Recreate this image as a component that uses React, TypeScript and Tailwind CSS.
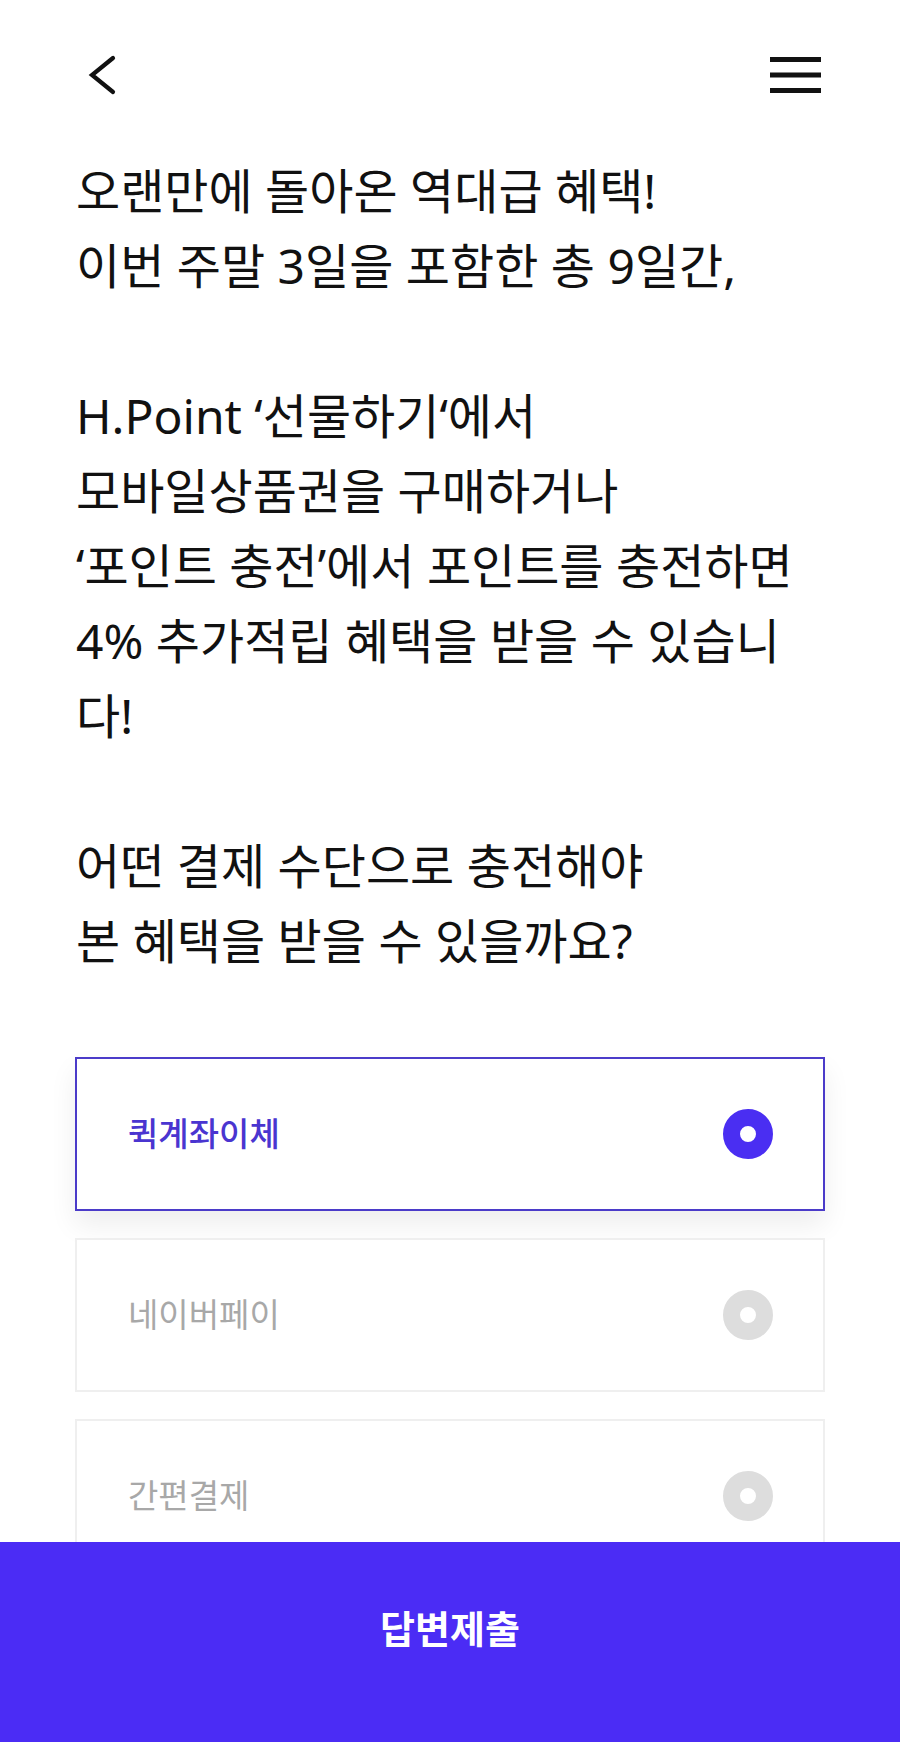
import React, { useState } from 'react';

const options = [
  { id: 'quick', label: '퀵계좌이체' },
  { id: 'naver', label: '네이버페이' },
  { id: 'simple', label: '간편결제' },
];

const lines = [
  '오랜만에 돌아온 역대급 혜택!',
  '이번 주말 3일을 포함한 총 9일간,',
  '',
  'H.Point ‘선물하기‘에서',
  '모바일상품권을 구매하거나',
  '‘포인트 충전’에서 포인트를 충전하면',
  '4% 추가적립 혜택을 받을 수 있습니',
  '다!',
  '',
  '어떤 결제 수단으로 충전해야',
  '본 혜택을 받을 수 있을까요?',
];

function Radio({ selected }: { selected: boolean }) {
  return (
    <div
      className={`w-[50px] h-[50px] rounded-full border-[17px] bg-white ${selected ? 'border-[#4a2ef2]' : 'border-[#dddddd]'}`}
    />
  );
}

export default function App() {
  const [selected, setSelected] = useState('quick');

  return (
    <div className="min-h-screen bg-white font-['Noto_Sans','Noto_Sans_CJK_KR',sans-serif]">
      {/* Top bar */}
      <header className="h-[150px] flex items-center justify-between pl-[87px] pr-[79px]">
        <button aria-label="back">
          <svg width="30" height="40" viewBox="0 0 30 40" fill="none">
            <polyline points="26,3 5,20 26,37" stroke="#111" strokeWidth="4.2" strokeLinecap="round" strokeLinejoin="miter" />
          </svg>
        </button>
        <button aria-label="menu">
          <svg width="51" height="36" viewBox="0 0 51 36">
            <rect x="0" y="0" width="51" height="5" fill="#111" />
            <rect x="0" y="15.5" width="51" height="5" fill="#111" />
            <rect x="0" y="31" width="51" height="5" fill="#111" />
          </svg>
        </button>
      </header>

      {/* Question text */}
      <div className="pt-[3px] px-[76px] text-[48px] leading-[75px] text-[#111] whitespace-nowrap">
        {lines.map((l, i) => (
          <div key={i} className="h-[75px]">{l}</div>
        ))}
      </div>

      {/* Options */}
      <div className="mt-[79px] mx-[75px] flex flex-col gap-[27px] pb-[240px]">
        {options.map((o) => {
          const on = selected === o.id;
          return (
            <button
              key={o.id}
              onClick={() => setSelected(o.id)}
              className={`h-[154px] flex items-center justify-between pl-[51px] pr-[50px] bg-white border-2 text-left ${on ? 'border-[#4b3bc9] shadow-[0_14px_26px_rgba(0,0,0,0.07)]' : 'border-[#efefef]'}`}
            >
              <span className={`text-[33px] ${on ? 'text-[#4a35d0] font-medium' : 'text-[#a8a8a8]'}`}>{o.label}</span>
              <Radio selected={on} />
            </button>
          );
        })}
      </div>

      {/* Submit */}
      <button className="fixed bottom-0 inset-x-0 h-[200px] bg-[#4b2cf5] flex items-center justify-center pb-[28px]">
        <span className="text-white text-[38px] font-bold">답변제출</span>
      </button>
    </div>
  );
}
